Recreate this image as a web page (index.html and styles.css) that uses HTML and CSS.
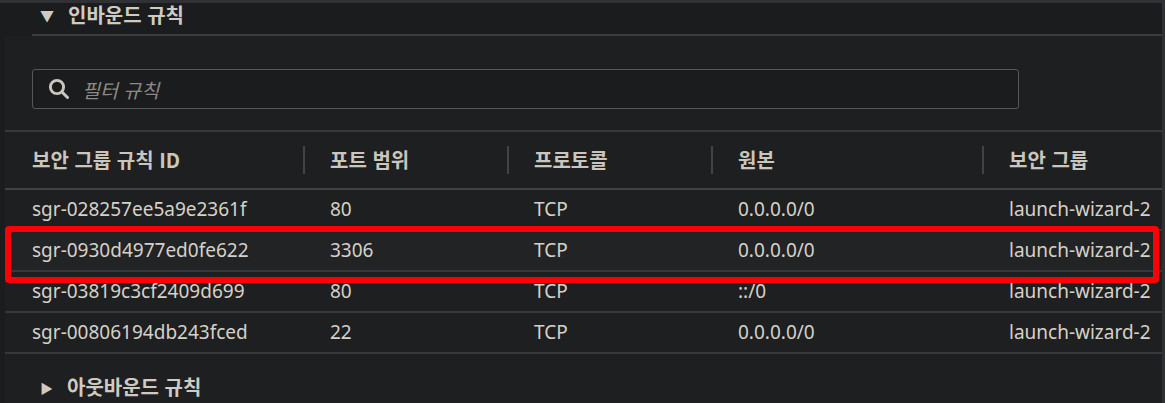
FILE: index.html
```html
<!DOCTYPE html>
<html lang="ko">

<head>
    <meta charset="UTF-8">
    <meta name="viewport" content="width=device-width, initial-scale=1.0">
    <title>보안 그룹 규칙</title>
    <link rel="stylesheet" href="styles.css">
</head>

<body>
    <div class="panel">
        <!--인바운드 헤더-->
        <div class="section-head">
            <span class="caret">&#9660;</span>
            <span class="section-title">인바운드 규칙</span>
        </div>
        <div class="section-body">
            <div class="filter">
                <svg class="filter-icon" width="22" height="22" viewBox="0 0 22 22">
                    <circle cx="9" cy="9" r="6.6" fill="none" stroke="#cbc6bd" stroke-width="2.9" />
                    <line x1="14" y1="14" x2="19.5" y2="19.5" stroke="#cbc6bd" stroke-width="3" stroke-linecap="round" />
                </svg>
                <input class="filter-input" type="text" placeholder="필터 규칙">
            </div>
            <div class="table-wrap">
                <table class="rules">
                    <colgroup>
                        <col class="c1">
                        <col class="c2">
                        <col class="c3">
                        <col class="c4">
                        <col>
                    </colgroup>
                    <thead>
                        <tr>
                            <th>보안 그룹 규칙 ID</th>
                            <th><span class="sep"></span>포트 범위</th>
                            <th><span class="sep"></span>프로토콜</th>
                            <th><span class="sep"></span>원본</th>
                            <th><span class="sep"></span>보안 그룹</th>
                        </tr>
                    </thead>
                    <tbody>
                        <tr>
                            <td>sgr-028257ee5a9e2361f</td>
                            <td>80</td>
                            <td>TCP</td>
                            <td>0.0.0.0/0</td>
                            <td>launch-wizard-2</td>
                        </tr>
                        <tr class="hover">
                            <td>sgr-0930d4977ed0fe622</td>
                            <td>3306</td>
                            <td>TCP</td>
                            <td>0.0.0.0/0</td>
                            <td>launch-wizard-2</td>
                        </tr>
                        <tr>
                            <td>sgr-03819c3cf2409d699</td>
                            <td>80</td>
                            <td>TCP</td>
                            <td>::/0</td>
                            <td>launch-wizard-2</td>
                        </tr>
                        <tr>
                            <td>sgr-00806194db243fced</td>
                            <td>22</td>
                            <td>TCP</td>
                            <td>0.0.0.0/0</td>
                            <td>launch-wizard-2</td>
                        </tr>
                    </tbody>
                </table>
                <!--강조 표시-->
                <div class="mark"></div>
            </div>
            <div class="section-head collapsed">
                <span class="caret small">&#9654;</span>
                <span class="section-title">아웃바운드 규칙</span>
            </div>
        </div>
    </div>
</body>

</html>
```

FILE: styles.css
```css
html,
body {
    margin: 0px;
    padding: 0px;
    height: 100%;
}

body {
    background: #18191b;
    font-family: "Noto Sans", "Noto Sans CJK KR", sans-serif;
    color: #d6d1c8;
    overflow: hidden;
}

.panel {
    height: 100%;
    border-top: #2f3134 solid 3px;
    border-right: #2f3134 solid 3px;
    box-sizing: border-box;
    background: #1b1c1e;
    display: flex;
    flex-direction: column;
}

.section-head {
    margin-left: 32px;
    height: 31px;
    flex: none;
    border-bottom: #3a3c3f solid 2px;
    display: flex;
    align-items: center;
    padding-left: 8px;
    gap: 14px;
}

.caret {
    font-size: 14px;
    color: #d0cbc2;
    line-height: 1;
    margin-top: -5px;
}

.caret.small {
    font-size: 13px;
    margin-top: 0px;
}

.section-title {
    font-family: "Noto Sans CJK KR", sans-serif;
    font-weight: 700;
    font-size: 20px;
    line-height: 1;
    color: #d0cbc2;
    margin-top: -7px;
}

.section-body {
    margin-left: 5px;
    background: #1e1f20;
    padding-top: 33px;
    flex: 1;
    overflow: hidden;
}

.filter {
    margin-left: 27px;
    width: 987px;
    height: 40px;
    box-sizing: border-box;
    border: #55575b solid 1px;
    border-radius: 3px;
    background: #1b1c1e;
    display: flex;
    align-items: center;
    padding-left: 15px;
    gap: 12px;
}

.filter-input {
    background: transparent;
    border: none;
    outline: none;
    font-family: "Noto Sans CJK KR", sans-serif;
    font-style: italic;
    font-size: 19.5px;
    color: #d6d1c8;
    flex: 1;
    padding: 0px;
}

.filter-input::placeholder {
    color: #8e8a83;
}

.table-wrap {
    position: relative;
    margin-top: 21px;
}

.rules {
    width: 100%;
    border-collapse: collapse;
    table-layout: fixed;
    border-top: #36383b solid 2px;
}

.rules col.c1 {
    width: 298px;
}

.rules col.c2,
.rules col.c3 {
    width: 204px;
}

.rules col.c4 {
    width: 271px;
}

.rules th {
    position: relative;
    height: 56px;
    text-align: left;
    padding: 0px 0px 0px 27px;
    font-family: "Noto Sans CJK KR", sans-serif;
    font-weight: 700;
    font-size: 20px;
    line-height: 1;
    color: #cbc6bd;
    border-bottom: #414346 solid 2px;
}

.rules th .sep {
    position: absolute;
    left: 0px;
    top: 14px;
    height: 28px;
    border-left: #414346 solid 2px;
}

.rules td {
    height: 39px;
    padding: 0px 0px 0px 27px;
    font-size: 19px;
    line-height: 1;
    border-bottom: #36383b solid 2px;
    white-space: nowrap;
}

.rules tr.hover td {
    background: #222325;
}

.mark {
    position: absolute;
    left: 0px;
    top: 96px;
    width: 1154px;
    height: 57px;
    box-sizing: border-box;
    border: #fb0006 solid 6px;
    border-radius: 4px;
}

.section-head.collapsed {
    border-bottom: none;
    margin-left: 27px;
    margin-top: 19px;
    height: 30px;
}

.section-head.collapsed .section-title {
    margin-top: -2px;
}
```
